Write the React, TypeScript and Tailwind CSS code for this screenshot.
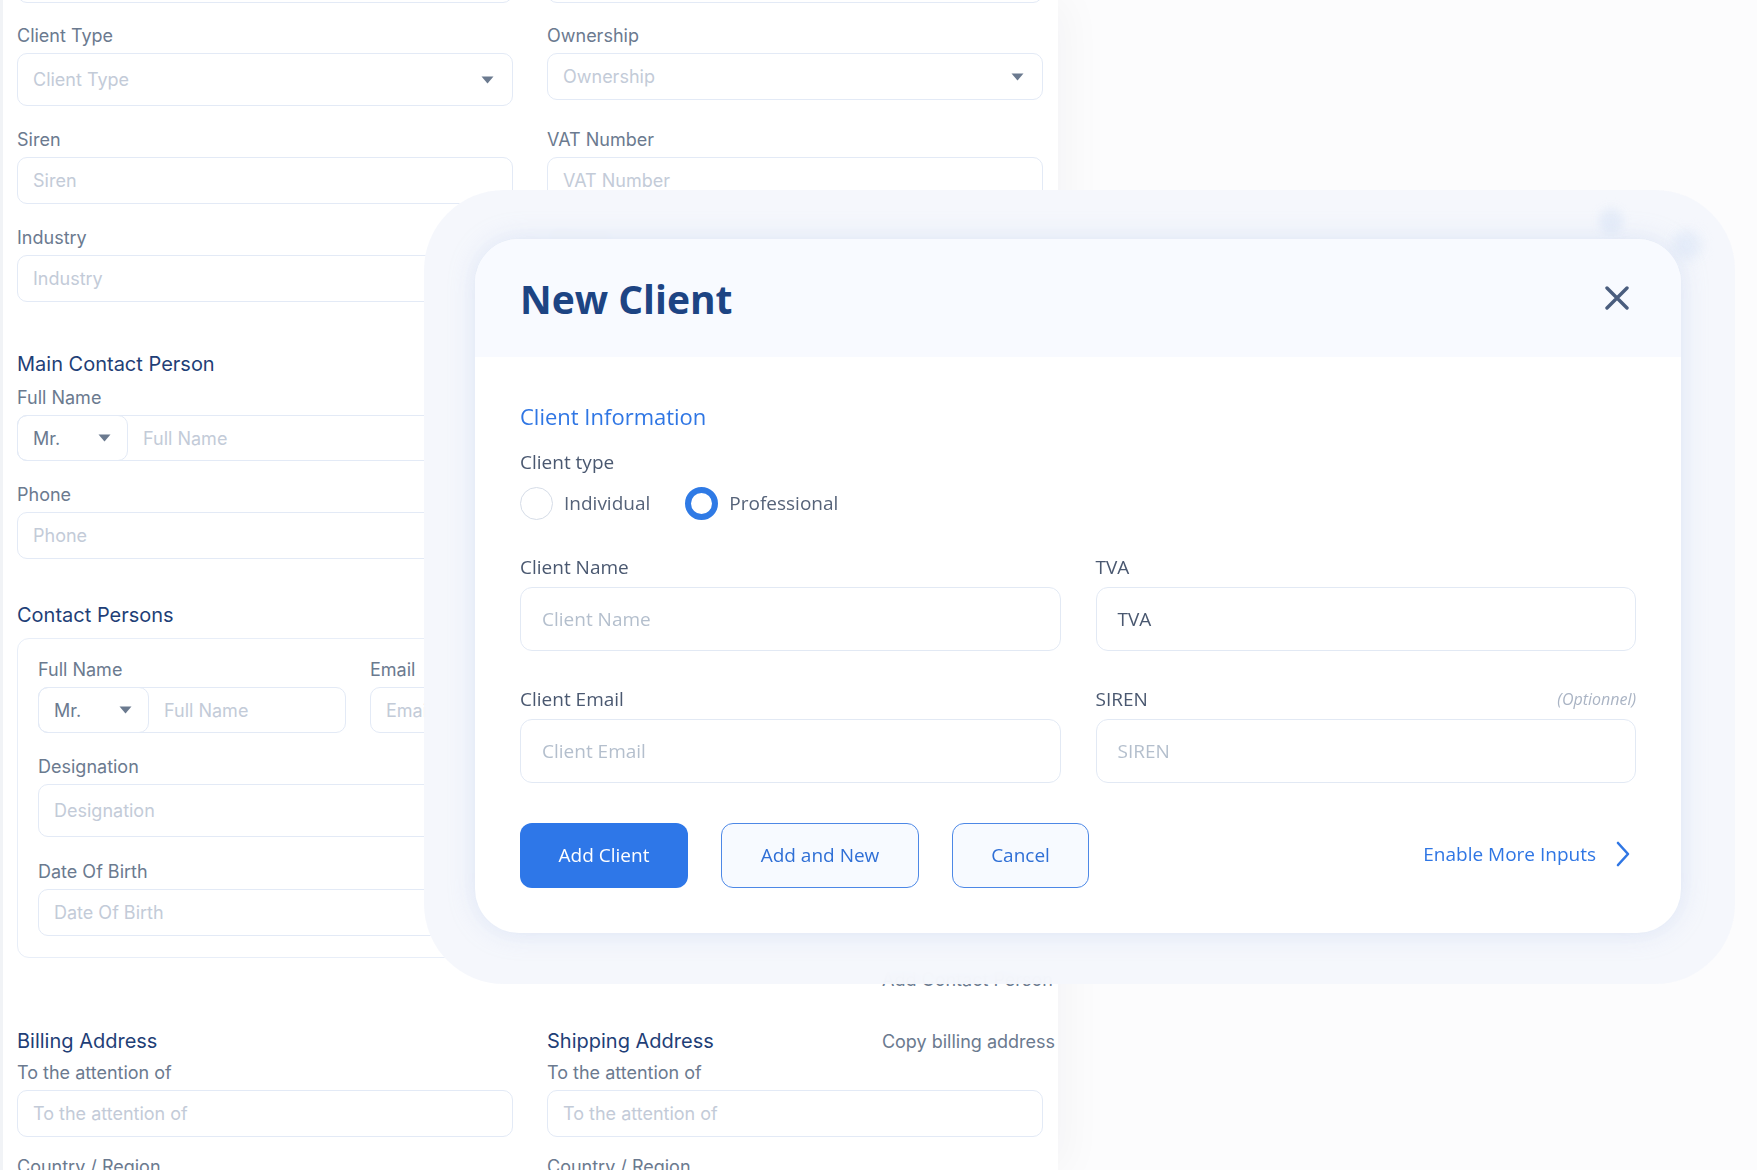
import { ReactNode } from "react";

const Caret = () => (
  <svg width="13" height="8" viewBox="0 0 13 8" className="shrink-0">
    <path d="M0.5 0.5h12L6.5 7.5z" fill="#6b7a8f" />
  </svg>
);

const Label = ({ children }: { children: ReactNode }) => (
  <div className="mb-[5px] h-6 text-[18px] leading-6 text-[#6b7a8f]">{children}</div>
);

const Input = ({
  placeholder,
  height = "h-[47px]",
}: {
  placeholder: string;
  height?: string;
}) => (
  <div
    className={`${height} flex items-center rounded-[10px] border border-[#e3eaf6] bg-white px-[15px] text-[18px] text-[#c3cbd8]`}
  >
    {placeholder}
  </div>
);

const Select = ({
  placeholder,
  height = "h-[47px]",
}: {
  placeholder: string;
  height?: string;
}) => (
  <div
    className={`${height} flex items-center justify-between rounded-[10px] border border-[#e3eaf6] bg-white pl-[15px] pr-[18px] text-[18px] text-[#c3cbd8]`}
  >
    <span>{placeholder}</span>
    <Caret />
  </div>
);

// salutation dropdown glued to a name input
const NameInput = ({ width = "w-full" }: { width?: string }) => (
  <div className={`${width} flex h-[46px] rounded-[10px] border border-[#e3eaf6] bg-white`}>
    <div className="-my-px -ml-px flex w-[111px] shrink-0 items-center justify-between rounded-[10px] border border-[#e3eaf6] pl-[15px] pr-[16px] text-[18px] text-[#6b7a8f]">
      <span>Mr.</span>
      <Caret />
    </div>
    <div className="flex items-center pl-[15px] text-[18px] text-[#c3cbd8]">Full Name</div>
  </div>
);

const Heading = ({ children }: { children: ReactNode }) => (
  <h3 className="h-7 text-[20px] leading-7 text-[#1f3f77]">{children}</h3>
);

const ModalField = ({
  label,
  value,
  placeholder,
  hint,
}: {
  label: string;
  value?: string;
  placeholder?: string;
  hint?: string;
}) => (
  <div>
    <div className="flex h-[26px] items-center justify-between">
      <span className="text-[19px] leading-[26px] text-[#4a5870]">{label}</span>
      {hint && <span className="text-[16px] italic text-[#aab4c4]">{hint}</span>}
    </div>
    <div className="mt-[7px] flex h-[64px] items-center rounded-[12px] border border-[#e2e9f4] px-[21px] text-[19px]">
      {value ? (
        <span className="text-[#4a5870]">{value}</span>
      ) : (
        <span className="text-[#b4bfcd]">{placeholder}</span>
      )}
    </div>
  </div>
);

const Radio = ({ label, checked }: { label: string; checked?: boolean }) => (
  <div className="flex items-center">
    <span
      className={
        checked
          ? "h-[33px] w-[33px] rounded-full border-[6px] border-[#2f7ae5] bg-white"
          : "h-[33px] w-[33px] rounded-full border-[1.5px] border-[#d5dce7] bg-white"
      }
    />
    <span className="ml-[11px] text-[19px] text-[#566379]">{label}</span>
  </div>
);

const NewClientModal = () => (
  <div className="absolute left-[424px] top-[190px] h-[794px] w-[1311px] rounded-[80px] bg-[#f4f7fc]/95 pb-[51px] pl-[51px] pr-[54px] pt-[49px] font-['Open_Sans',sans-serif] backdrop-blur-sm">
    <div className="absolute left-[1175px] top-[18px] h-[26px] w-[24px] rounded-full bg-[#e6edf9] blur-[5px]" />
    <div className="absolute left-[1248px] top-[40px] h-[30px] w-[30px] rounded-full bg-[#e6edf9] blur-[6px]" />

    <div className="relative flex h-full flex-col overflow-hidden rounded-[44px] bg-white shadow-[0_0_26px_rgba(170,190,228,0.35)]">
      <div className="flex h-[118px] shrink-0 items-center justify-between bg-[#f8faff] pl-[45px] pr-[52px]">
        <h1 className="text-[39px] font-bold leading-none text-[#1d4483]">New Client</h1>
        <svg width="24" height="24" viewBox="0 0 24 24">
          <path
            d="M2 2L22 22M22 2L2 22"
            stroke="#4a5d7e"
            strokeWidth="3.4"
            strokeLinecap="round"
          />
        </svg>
      </div>

      <div className="px-[45px] pt-[45px]">
        <h2 className="h-7 text-[22px] leading-7 text-[#2f76e4]">Client Information</h2>
        <div className="mt-[19px] h-[26px] text-[19px] leading-[26px] text-[#4a5870]">
          Client type
        </div>
        <div className="mt-[12px] flex h-[33px] items-center gap-[35px]">
          <Radio label="Individual" />
          <Radio label="Professional" checked />
        </div>

        <div className="mt-[34px] grid grid-cols-2 gap-x-[35px] gap-y-[35px]">
          <ModalField label="Client Name" placeholder="Client Name" />
          <ModalField label="TVA" value="TVA" />
          <ModalField label="Client Email" placeholder="Client Email" />
          <ModalField label="SIREN" placeholder="SIREN" hint="(Optionnel)" />
        </div>

        <div className="mt-[40px] flex items-center justify-between">
          <div className="flex gap-[33px]">
            <button className="h-[65px] w-[168px] rounded-[12px] bg-[#2e77e8] text-[19px] text-white">
              Add Client
            </button>
            <button className="h-[65px] w-[198px] rounded-[12px] border border-[#4d88e6] bg-[#f7faff] text-[19px] text-[#2f6fd6]">
              Add and New
            </button>
            <button className="h-[65px] w-[137px] rounded-[12px] border border-[#4d88e6] bg-[#f7faff] text-[19px] text-[#2f6fd6]">
              Cancel
            </button>
          </div>
          <button className="-mt-[3px] mr-[6px] flex items-center gap-[20px] text-[19px] text-[#2f76e4]">
            Enable More Inputs
            <svg width="14" height="26" viewBox="0 0 14 26">
              <path
                d="M2 2L12 13L2 24"
                fill="none"
                stroke="#2f76e4"
                strokeWidth="2.6"
                strokeLinecap="round"
                strokeLinejoin="round"
              />
            </svg>
          </button>
        </div>
      </div>
    </div>
  </div>
);

export default function App() {
  return (
    <div className="relative h-[1170px] w-[1757px] overflow-hidden bg-[#fcfcfd]">
      {/* client form behind the dialog */}
      <div className="h-full w-[1058px] overflow-hidden border-l-[3px] border-[#f1f3f6] bg-white pl-[14px] font-['Inter',sans-serif] shadow-[8px_0_40px_rgba(15,23,42,0.04)]">
        <div className="w-[1026px]">
          <div className="-mt-[45px] grid grid-cols-2 gap-x-[34px]">
            <Input placeholder="" height="h-[48px]" />
            <Input placeholder="" height="h-[48px]" />
          </div>

          <div className="mt-[21px] grid grid-cols-2 items-start gap-x-[34px]">
            <div>
              <Label>Client Type</Label>
              <Select placeholder="Client Type" height="h-[53px]" />
            </div>
            <div>
              <Label>Ownership</Label>
              <Select placeholder="Ownership" />
            </div>
          </div>

          <div className="mt-[22px] grid grid-cols-2 items-start gap-x-[34px]">
            <div>
              <Label>Siren</Label>
              <Input placeholder="Siren" />
            </div>
            <div>
              <Label>VAT Number</Label>
              <Input placeholder="VAT Number" />
            </div>
          </div>

          <div className="mt-[22px] grid grid-cols-2 items-start gap-x-[34px]">
            <div>
              <Label>Industry</Label>
              <Input placeholder="Industry" />
            </div>
            <div>
              <Label>Website</Label>
              <Input placeholder="Website" />
            </div>
          </div>

          <div className="mt-[48px]">
            <Heading>Main Contact Person</Heading>
          </div>
          <div className="mt-[8px] grid grid-cols-2 items-start gap-x-[34px]">
            <div>
              <Label>Full Name</Label>
              <NameInput />
            </div>
            <div>
              <Label>Email</Label>
              <Input placeholder="Email" />
            </div>
          </div>
          <div className="mt-[21px] grid grid-cols-2 items-start gap-x-[34px]">
            <div>
              <Label>Phone</Label>
              <Input placeholder="Phone" />
            </div>
            <div>
              <Label>Designation</Label>
              <Input placeholder="Designation" />
            </div>
          </div>

          <div className="mt-[42px]">
            <Heading>Contact Persons</Heading>
          </div>
          <div className="mt-[9px] rounded-[12px] border border-[#e8eef8] px-[20px] pb-[21px] pt-[19px]">
            <div className="flex items-start gap-[24px]">
              <div className="w-[308px]">
                <Label>Full Name</Label>
                <NameInput />
              </div>
              <div className="flex-1">
                <Label>Email</Label>
                <Input placeholder="Email" height="h-[46px]" />
              </div>
            </div>
            <div className="mt-[22px] w-[640px]">
              <Label>Designation</Label>
              <Input placeholder="Designation" height="h-[53px]" />
            </div>
            <div className="mt-[23px] w-[640px]">
              <Label>Date Of Birth</Label>
              <Input placeholder="Date Of Birth" />
            </div>
          </div>

          <div className="mt-[10px] -mr-[10px] h-6 text-right text-[18px] leading-6 text-[#6b7a8f]">
            Add Contact Person
          </div>

          <div className="mt-[35px] grid grid-cols-2 items-start gap-x-[34px]">
            <Heading>Billing Address</Heading>
            <div className="-mr-[12px] flex items-center justify-between">
              <Heading>Shipping Address</Heading>
              <span className="text-[18px] text-[#6b7a8f]">Copy billing address</span>
            </div>
          </div>
          <div className="mt-[6px] grid grid-cols-2 items-start gap-x-[34px]">
            <div>
              <Label>To the attention of</Label>
              <Input placeholder="To the attention of" />
            </div>
            <div>
              <Label>To the attention of</Label>
              <Input placeholder="To the attention of" />
            </div>
          </div>
          <div className="mt-[18px] grid grid-cols-2 items-start gap-x-[34px]">
            <Label>Country / Region</Label>
            <Label>Country / Region</Label>
          </div>
        </div>
      </div>

      <NewClientModal />
    </div>
  );
}
